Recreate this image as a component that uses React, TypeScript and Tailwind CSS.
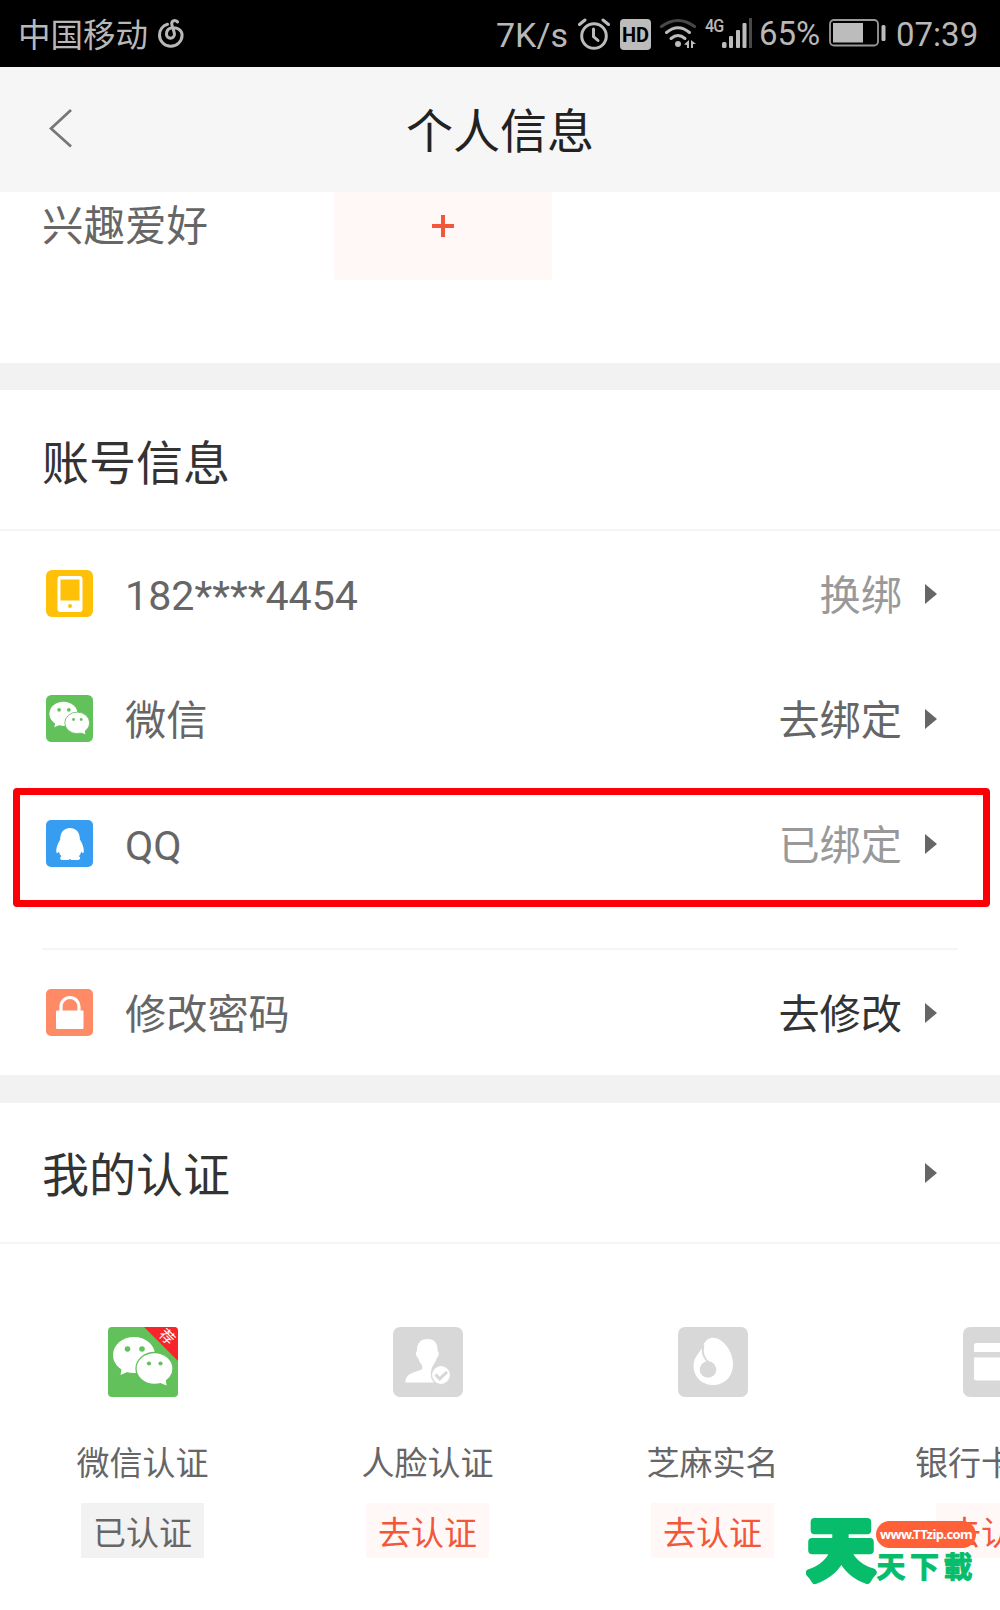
import type { ReactNode } from "react";

interface AccountRowProps {
  icon: ReactNode;
  label: string;
  action: string;
  actionColor: string;
}

interface CertificationProps {
  icon: ReactNode;
  title: string;
  done?: boolean;
}

const Arrow = () => (
  <svg className="h-5 w-3 shrink-0" viewBox="0 0 12 20">
    <path d="M0 0 L12 10 L0 20 Z" fill="#666" />
  </svg>
);

const MusicIcon = () => (
  <svg className="ml-2.5 h-[30px] w-[26px]" viewBox="0 0 26 30" fill="none" stroke="#b8b8b8" strokeWidth="3" strokeLinecap="round">
    <path d="M9.5 5.2C4.5 6.7 1.5 11 1.5 16a11.3 11.3 0 0 0 22.6 0C24 11 19 8 14 8.8C10 9.5 8.5 12.3 8.5 15a4 4 0 0 0 8 .3C16.3 12 13.7 7 13.7 4.5C13.7 1.2 17.5.8 19.5 2.9" />
  </svg>
);

const AlarmIcon = () => (
  <svg className="h-8 w-8" viewBox="0 0 32 32" fill="none" stroke="#bcbcbc" strokeWidth="3" strokeLinecap="round">
    <circle cx="16" cy="18" r="12.3" />
    <path d="M1.5 6.5L7 2M30.5 6.5L25 2" />
    <path d="M15.5 11v7.5l4.5 4" />
  </svg>
);

const WifiIcon = () => (
  <svg className="h-8 w-9" viewBox="0 0 36 32" fill="none" strokeLinecap="round" strokeWidth="3">
    <path d="M1.5 8.5Q18-3.5 34.5 8.5" stroke="#484848" />
    <path d="M6.5 14.5Q18 5 29.5 14.5" stroke="#bcbcbc" />
    <path d="M11 20.5Q18 14.5 25 20.5" stroke="#bcbcbc" />
    <circle cx="18" cy="26" r="3" fill="#bcbcbc" />
    <path d="M24 26.5l5-4.5v8h-2v-3zM31 22l5 4h-3v4h-2z" fill="#bcbcbc" />
  </svg>
);

const SignalIcon = () => (
  <svg className="h-8 w-[30px]" viewBox="0 0 30 32" fill="#bcbcbc">
    <rect x="0" y="24" width="4.5" height="6" rx="1.5" />
    <rect x="7" y="18" width="4" height="12" rx="1" />
    <rect x="14" y="12" width="4" height="18" rx="1" />
    <rect x="20.5" y="5" width="4" height="25" rx="1" />
    <rect x="27" y="0" width="3" height="30" fill="#484848" />
  </svg>
);

const BatteryIcon = () => (
  <svg className="h-7 w-[57px]" viewBox="0 0 57 28">
    <rect x="1" y="1" width="48" height="25.5" rx="4" fill="none" stroke="#999" strokeWidth="1.8" />
    <rect x="4" y="4" width="30" height="19.5" fill="#bcbcbc" />
    <rect x="52.5" y="6" width="4" height="16" rx="1.5" fill="#bcbcbc" />
  </svg>
);

const StatusBar = () => (
  <div className="flex h-[67px] items-center bg-black pl-[18px] font-['Roboto','Noto_Sans_CJK_SC',sans-serif] text-[#b8b8b8]">
    <span className="pt-[5px] text-[32.5px] leading-none">中国移动</span>
    <MusicIcon />
    <span className="ml-[312px] w-[70px] pt-0.5 text-[34px] leading-none whitespace-nowrap">7K/s</span>
    <div className="ml-3"><AlarmIcon /></div>
    <div className="mt-0.5 ml-[10px] flex h-[31px] w-[31px] items-center justify-center rounded bg-[#bcbcbc] text-[20px] leading-none font-bold text-black">
      HD
    </div>
    <div className="ml-[9px]"><WifiIcon /></div>
    <span className="ml-[9px] w-[17px] origin-left -translate-y-[8px] scale-x-85 text-[19px] leading-none font-medium tracking-[-1px]">4G</span>
    <SignalIcon />
    <span className="ml-[7px] w-[61px] text-[33px] leading-none whitespace-nowrap">65%</span>
    <div className="-mt-0.5 ml-[9px]"><BatteryIcon /></div>
    <span className="ml-[10px] pt-[2px] text-[33px] leading-none">07:39</span>
  </div>
);

const PhoneIcon = () => (
  <svg className="size-[47px]" viewBox="0 0 47 47">
    <rect width="47" height="47" rx="6" fill="#ffc107" />
    <rect x="11.5" y="6" width="25" height="36" rx="3" fill="#fff" />
    <rect x="14.5" y="9.5" width="19" height="21" fill="#ffc107" />
    <circle cx="24" cy="36" r="2" fill="#ffc107" />
  </svg>
);

const Bubbles = () => (
  <>
    <path d="M14 40l-1.500 8 9-4z" fill="#fff" />
    <ellipse cx="26" cy="28" rx="21" ry="18" fill="#fff" />
    <circle cx="19.5" cy="22" r="2.8" fill="#62c15b" />
    <circle cx="34" cy="22" r="2.8" fill="#62c15b" />
    <ellipse cx="46.5" cy="41.5" rx="18.5" ry="16" fill="#fff" stroke="#62c15b" strokeWidth="1.3" />
    <path d="M50 55l8.500 3.500-1-8z" fill="#fff" />
    <circle cx="41" cy="36.5" r="2.1" fill="#62c15b" />
    <circle cx="52.5" cy="36.5" r="2.1" fill="#62c15b" />
  </>
);

const WechatIcon = () => (
  <svg className="size-[47px]" viewBox="0 0 70 70">
    <rect width="70" height="70" rx="8" fill="#62c15b" />
    <Bubbles />
  </svg>
);

const QQIcon = () => (
  <svg className="size-[47px]" viewBox="0 0 47 47">
    <rect width="47" height="47" rx="5" fill="#379df1" />
    <path
      d="M24 8c-6.500 0-10 5-9.800 11.500C12.500 22.500 10 27 10.300 32c.2 1.500 1.300 1.500 2.700-.5.300 2.200 1.200 3.500 2.500 4.800-2 1-1.500 3.700.5 3.700h6.500l1.500-1 1.500 1H32c2.500 0 3-2.700.8-3.700 1.300-1.300 2-2.800 2.400-4.800 1.500 2 2.500 2 2.600.5.300-5-2-9.500-3.900-12.500C34 13 30.500 8 24 8z"
      fill="#fff"
    />
  </svg>
);

const LockIcon = () => (
  <svg className="size-[47px]" viewBox="0 0 47 47">
    <rect width="47" height="47" rx="5" fill="#ff8a66" />
    <path d="M15 22v-4.500a9 9 0 0 1 18 0V22" fill="none" stroke="#fff" strokeWidth="3.2" />
    <rect x="10" y="21.5" width="27.5" height="18.5" rx="1" fill="#fff" />
  </svg>
);

const FaceIcon = () => (
  <svg className="size-[70px]" viewBox="0 0 70 70">
    <rect width="70" height="70" rx="7" fill="#d8d8d8" />
    <path
      d="M34.500 12c-7 0-11 4.500-10.500 12-1.800.5-1 6 1.200 7 .8 3.500 2.300 5.500 4 7.200V42c-5.500 3.500-16.700 3-16.700 13.500H42c-7-6-3-15-2.200-16.500.8-2 3-4 4-8 2.200-1.500 2.700-6.500.8-7C45 16.500 41.500 12 34.500 12z"
      fill="#fff"
    />
    <circle cx="48" cy="48" r="9.5" fill="#fff" stroke="#d8d8d8" strokeWidth="1.2" />
    <path d="M42.500 47.500l4.200 4.300 7.300-7" fill="none" stroke="#d8d8d8" strokeWidth="3" />
  </svg>
);

const SesameIcon = () => (
  <svg className="size-[70px]" viewBox="0 0 70 70">
    <rect width="70" height="70" rx="7" fill="#d8d8d8" />
    <path d="M33 11C43 9 55 23 55 37c0 13-9 21-20 21S15.500 50 15.500 39c0-8 5-12 8.500-18 2-4 3.500-9 9-10z" fill="#fff" />
    <path d="M25.500 18c-2 9 .5 13 5.500 18" fill="none" stroke="#d8d8d8" strokeWidth="2" />
    <circle cx="30" cy="42.5" r="8.3" fill="#d8d8d8" />
  </svg>
);

const BankCardIcon = () => (
  <svg className="size-[70px]" viewBox="0 0 70 70">
    <rect width="70" height="70" rx="7" fill="#d8d8d8" />
    <rect x="11" y="16" width="48" height="37.5" rx="2.5" fill="#fff" />
    <rect x="11" y="25" width="48" height="5.5" fill="#d8d8d8" />
  </svg>
);

const RecommendedWechatIcon = () => (
  <div className="relative size-[70px] overflow-hidden rounded">
    <svg className="size-[70px]" viewBox="0 0 70 70">
      <rect width="70" height="70" fill="#62c15b" />
      <path d="M36 0H70V34Z" fill="#f52529" />
      <Bubbles />
    </svg>
    <span className="absolute top-[3px] right-[3px] rotate-45 text-[15px] leading-none text-white">荐</span>
  </div>
);

const AccountRow = ({ icon, label, action, actionColor }: AccountRowProps) => (
  <div className="flex h-[125px] items-center pr-[63px] pl-[46px] text-[41.2px] leading-none">
    {icon}
    <span className="ml-8 flex-1 pt-[7px] text-[#666]">{label}</span>
    <span className={`mr-[23px] pt-[7px] ${actionColor}`}>{action}</span>
    <Arrow />
  </div>
);

const Certification = ({ icon, title, done }: CertificationProps) => (
  <div className="flex w-[285px] shrink-0 flex-col items-center">
    {icon}
    <span className="mt-[50px] text-[33px] leading-[34px] whitespace-nowrap text-[#666]">{title}</span>
    <span
      className={`mt-[22px] flex h-[55px] w-[123px] items-center justify-center pt-[5px] text-[33px] leading-none ${
        done ? "bg-[#f2f2f2] text-[#666]" : "bg-[#fff8f6] text-[#f2573a]"
      }`}
    >
      {done ? "已认证" : "去认证"}
    </span>
  </div>
);

const Watermark = () => (
  <div className="absolute top-[1510px] left-[806px] h-20 w-[176px]">
    <svg
      className="size-full font-['Noto_Sans_CJK_SC',sans-serif] font-bold"
      viewBox="0 0 176 80"
      fill="#07bd6c"
      stroke="#07bd6c"
      strokeLinejoin="round"
    >
      <text x="2" y="64" fontSize="66" strokeWidth="8">天</text>
      <text x="70.5" y="68" fontSize="29" strokeWidth="1" letterSpacing="4.5">天下載</text>
    </svg>
    <span className="absolute top-[11px] left-[70px] flex h-[27px] w-[100px] items-center justify-center rounded-full bg-[#ff6038] font-['Noto_Sans',sans-serif] text-[13px] leading-none font-bold tracking-[-0.6px] text-white">
      www.TTzip.com
    </span>
  </div>
);

export default function App() {
  return (
    <div className="relative h-[1610px] w-[1000px] overflow-hidden bg-white font-['Roboto','Noto_Sans_CJK_SC',sans-serif]">
      <StatusBar />

      <header className="relative flex h-[125px] items-center justify-center bg-[#f6f6f6]">
        <svg className="absolute top-[42px] left-[49px] h-10 w-6" viewBox="0 0 24 40" fill="none" stroke="#777" strokeWidth="2.8">
          <path d="M22 1L2 19.5L22 37.5" />
        </svg>
        <h1 className="pt-1 text-[47px] leading-none text-[#222]">个人信息</h1>
      </header>

      <section className="flex h-[171px] items-start pl-[42px] text-[41.5px] leading-none text-[#666]">
        <span className="w-[292px] pt-[14px]">兴趣爱好</span>
        <div className="flex h-[88px] w-[218px] justify-center bg-[#fff8f6] pt-[23px]">
          <svg className="mr-px size-[22px]" viewBox="0 0 22 22" stroke="#f2573a" strokeWidth="4">
            <path d="M11 0V22M0 11H22" />
          </svg>
        </div>
      </section>

      <section className="border-t-[27px] border-[#f2f2f2]">
        <h2 className="flex h-[141px] items-center border-b-2 border-[#f5f5f5] pt-[7px] pl-[42px] text-[47px] leading-none text-[#333]">
          账号信息
        </h2>
        <AccountRow icon={<PhoneIcon />} label="182****4454" action="换绑" actionColor="text-[#999]" />
        <AccountRow icon={<WechatIcon />} label="微信" action="去绑定" actionColor="text-[#666]" />
        <div className="relative">
          <AccountRow icon={<QQIcon />} label="QQ" action="已绑定" actionColor="text-[#999]" />
          <div className="absolute top-[7px] left-[13px] h-[119px] w-[977px] rounded-[4px] border-7 border-[#fb0007]" />
        </div>
        <div className="mx-[42px] h-[44px] border-b-2 border-[#f5f5f5]" />
        <AccountRow icon={<LockIcon />} label="修改密码" action="去修改" actionColor="text-[#333]" />
      </section>

      <section className="border-t-[28px] border-[#f2f2f2]">
        <div className="flex h-[141px] items-center justify-between border-b-2 border-[#f5f5f5] pr-[63px] pl-[42px]">
          <h2 className="pt-[6px] text-[47px] leading-none text-[#333]">我的认证</h2>
          <Arrow />
        </div>
        <div className="flex pt-[83px]">
          <Certification icon={<RecommendedWechatIcon />} title="微信认证" done />
          <Certification icon={<FaceIcon />} title="人脸认证" />
          <Certification icon={<SesameIcon />} title="芝麻实名" />
          <Certification icon={<BankCardIcon />} title="银行卡认证" />
        </div>
      </section>

      <Watermark />
    </div>
  );
}
